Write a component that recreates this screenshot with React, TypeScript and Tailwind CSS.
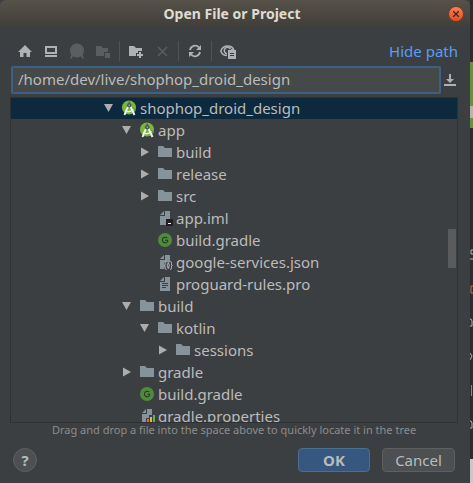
import { useState } from "react";
import type { ReactNode } from "react";

type IconName = "studio" | "folder" | "iml" | "gradle" | "json" | "text" | "properties";
type Arrow = "open" | "closed" | "none";
type Node = { name: string; icon: IconName; arrow: Arrow; indent: string };

const nodes: Node[] = [
  { name: "shophop_droid_design", icon: "studio", arrow: "open", indent: "pl-[89px]" },
  { name: "app", icon: "studio", arrow: "open", indent: "pl-[107px]" },
  { name: "build", icon: "folder", arrow: "closed", indent: "pl-[125px]" },
  { name: "release", icon: "folder", arrow: "closed", indent: "pl-[125px]" },
  { name: "src", icon: "folder", arrow: "closed", indent: "pl-[125px]" },
  { name: "app.iml", icon: "iml", arrow: "none", indent: "pl-[125px]" },
  { name: "build.gradle", icon: "gradle", arrow: "none", indent: "pl-[125px]" },
  { name: "google-services.json", icon: "json", arrow: "none", indent: "pl-[125px]" },
  { name: "proguard-rules.pro", icon: "text", arrow: "none", indent: "pl-[125px]" },
  { name: "build", icon: "folder", arrow: "open", indent: "pl-[107px]" },
  { name: "kotlin", icon: "folder", arrow: "open", indent: "pl-[125px]" },
  { name: "sessions", icon: "folder", arrow: "closed", indent: "pl-[143px]" },
  { name: "gradle", icon: "folder", arrow: "closed", indent: "pl-[107px]" },
  { name: "build.gradle", icon: "gradle", arrow: "none", indent: "pl-[107px]" },
  { name: "gradle.properties", icon: "properties", arrow: "none", indent: "pl-[107px]" },
];

function Svg({ children }: { children: ReactNode }) {
  return (
    <svg width="16" height="16" viewBox="0 0 16 16" className="shrink-0" aria-hidden="true">
      {children}
    </svg>
  );
}

const page = (
  <g fill="#87939a">
    <path d="M8 1h5v14H3V6h5z" />
    <path d="M7 1v4H3z" />
  </g>
);

function FileIcon({ name }: { name: IconName }) {
  switch (name) {
    case "studio":
      return (
        <Svg>
          <circle cx="8" cy="7.500" r="7" fill="#78b83f" />
          <path d="M9 5l6 5-3 4z" fill="#5d9a30" />
          <path d="M7 6.500 3.500 15M9.500 6.500 13.500 15" fill="none" stroke="#f4f4f4" strokeWidth="1.900" />
          <path d="M4 10.500q4 3 8.500-1" fill="none" stroke="#f4f4f4" strokeWidth="1.400" />
          <circle cx="8.200" cy="5.300" r="2.300" fill="#50565a" />
          <circle cx="8.200" cy="5.300" r="0.800" fill="#a8b8a0" />
          <path d="M7.500 1.500h1.400v2H7.500z" fill="#50565a" />
        </Svg>
      );
    case "folder":
      return (
        <Svg>
          <path d="M1 2h5l2 2h7v9H1z" fill="#87939a" />
        </Svg>
      );
    case "iml":
      return (
        <Svg>
          {page}
          <path d="M9 9h7v7H9z" fill="#231f20" />
          <path d="M11 13h3v1h-3z" fill="#fff" />
        </Svg>
      );
    case "gradle":
      return (
        <Svg>
          <circle cx="8" cy="8" r="7" fill="#4f8b3b" />
          <path d="M10.300 6.200A2.800 2.800 0 1 0 10.600 9.500V8.200H8.200" fill="none" stroke="#263a25" strokeWidth="1.100" />
        </Svg>
      );
    case "json":
      return (
        <Svg>
          {page}
          <path d="M7 8h9v8H7z" fill="#3c3f41" opacity=".8" />
          <path
            d="M9.500 7.500q-2 0-1.500 2.200Q8.500 11.500 7 11.500 8.500 11.500 8 13.300 7.500 15.500 9.500 15.500M13 7.500q2 0 1.500 2.200-.5 1.800 1 1.800-1.500 0-1 1.800.5 2.200-1.500 2.200M11.300 8.500q-2 3 0 6 2-3 0-6"
            fill="none"
            stroke="#aab2b6"
          />
        </Svg>
      );
    case "text":
      return (
        <Svg>
          {page}
          <path d="M5 7h6v1H5zM5 9h6v1H5zM5 11h4v1H5z" fill="#3c3f41" />
        </Svg>
      );
    case "properties":
      return (
        <Svg>
          {page}
          <path d="M7 10h3V7h3V6h3v10H7z" fill="#3c3f41" />
          <path d="M8 11h2v5H8z" fill="#f26522" />
          <path d="M11 9h2v7h-2z" fill="#f4af3d" />
          <path d="M14 7h2v9h-2z" fill="#62b543" />
        </Svg>
      );
  }
}

function ArrowIcon({ kind }: { kind: Arrow }) {
  return (
    <Svg>
      {kind === "open" && <path d="M4 4h9l-4.500 8z" fill="#adadad" />}
      {kind === "closed" && <path d="M5 3.500v9L13 8z" fill="#adadad" />}
    </Svg>
  );
}

function Tool({ label, disabled, children }: { label: string; disabled?: boolean; children: ReactNode }) {
  return (
    <button
      type="button"
      aria-label={label}
      disabled={disabled}
      className="flex size-4 items-center justify-center text-[#afb1b3] disabled:text-[#5b5d5e]"
    >
      {children}
    </button>
  );
}

function Divider() {
  return <span className="-mx-[2px] h-5 w-px bg-[#515355]" />;
}

function Toolbar() {
  return (
    <div className="flex h-9 items-center justify-between pt-[10px] pl-[7px]">
      <div className="flex items-center gap-[10px]">
        <Tool label="Home">
          <Svg>
            <path d="M8 2 15 9h-2v5H9.500v-4h-3v4H3V9H1z" fill="currentColor" />
          </Svg>
        </Tool>
        <Tool label="Desktop">
          <Svg>
            <path d="M3 4h10v6H3zM2 13h12" fill="none" stroke="currentColor" strokeWidth="2" strokeLinecap="butt" />
          </Svg>
        </Tool>
        <Tool label="Project" disabled>
          <Svg>
            <path d="M3.500 11 2 15.500M12.500 11l1.500 4.500" stroke="currentColor" strokeWidth="2" />
            <circle cx="8" cy="7.500" r="7" fill="currentColor" />
          </Svg>
        </Tool>
        <Tool label="Module" disabled>
          <Svg>
            <path d="M1 3h5l2 2h5v4H9v4H1zM10 10h5v5h-5z" fill="currentColor" />
          </Svg>
        </Tool>
        <Divider />
        <Tool label="New folder">
          <Svg>
            <path d="M1 3h5l2 2h6v3h-4v2H8v3H1zM11 9h2v2h2v2h-2v2h-2v-2H9v-2h2z" fill="currentColor" />
          </Svg>
        </Tool>
        <Tool label="Delete" disabled>
          <Svg>
            <path d="m4 4 9 9M13 4l-9 9" stroke="currentColor" strokeWidth="1.500" />
          </Svg>
        </Tool>
        <Divider />
        <Tool label="Refresh">
          <Svg>
            <path
              d="M3 7a5.200 5.200 0 0 1 9-2.500M13 9a5.200 5.200 0 0 1-9 2.500"
              fill="none"
              stroke="currentColor"
              strokeWidth="1.800"
            />
            <path d="M14 2v5H9zM2 14V9h5z" fill="currentColor" />
          </Svg>
        </Tool>
        <Divider />
        <Tool label="Show hidden files">
          <Svg>
            <path
              d="M7 12.500C4 12.500 1.500 10.500.8 8 2 5 4.500 3 7.500 3s5.500 1.500 6.500 4"
              fill="none"
              stroke="currentColor"
              strokeWidth="1.500"
            />
            <path d="M10.500 6A3.300 3.300 0 1 0 7 10.800" fill="none" stroke="currentColor" strokeWidth="1.600" />
            <path fillRule="evenodd" d="M8 7h3V6h2v1h3v9H8zM10 10v1h4v-1zM10 12v1h4v-1z" fill="currentColor" />
          </Svg>
        </Tool>
      </div>
      <a href="#path" className="text-[#589df6]">
        Hide path
      </a>
    </div>
  );
}

function Backdrop() {
  return (
    <div className="flex w-[3px] shrink-0 flex-col" aria-hidden="true">
      <div className="h-[62px]" />
      <div className="h-11 bg-[#609635]" />
      <div className="h-3 bg-[#b4b5b3]" />
      <div className="h-[10px] bg-[#609635]" />
      <svg width="3" height="331" viewBox="0 0 3 331" className="flex-1">
        <g fill="none" strokeWidth="1">
          <path d="M3 122H1v4h2M0 131h3" stroke="#a9b7c6" />
          <path d="M3 158H1v7h2" stroke="#cc7832" />
          <path d="M0 191h1l1 2v5H0M0 225l2 3-2 4M0 293h1l1 2v5H0" stroke="#a9b7c6" />
          <path d="M1.500 257v11" stroke="#6897bb" />
        </g>
      </svg>
      <div className="h-6 bg-[#c8c8c8]" />
    </div>
  );
}

export default function App() {
  const [path, setPath] = useState("/home/dev/live/shophop_droid_design");
  const [selected, setSelected] = useState(0);

  return (
    <div className="flex bg-[#2b2d2f] font-['Noto_Sans','Open_Sans',sans-serif] text-[15px] leading-[22px] text-[#bbbbbb]">
      <main className="flex min-w-0 flex-1 flex-col bg-[#3c3f41]">
        <header className="flex h-7 items-center rounded-t-md bg-linear-to-b from-[#565249] to-[#403e39] pr-[6px] pl-4">
          <h1 className="flex-1 text-center text-sm font-bold text-[#dfdbd2]">Open File or Project</h1>
          <button
            type="button"
            aria-label="Close"
            className="flex size-4 items-center justify-center rounded-full border border-[#7f3a22] bg-linear-to-b from-[#f58056] to-[#df4c1c]"
          >
            <svg width="6" height="6" viewBox="0 0 6 6" aria-hidden="true">
              <path d="m0 0 6 6M6 0 0 6" stroke="#4b2418" strokeWidth="1.300" />
            </svg>
          </button>
        </header>

        <div className="flex flex-col pr-3 pl-[10px]">
          <Toolbar />
          <div className="flex items-center gap-px pt-[2px] pb-[3px] pl-px">
            <input
              aria-label="Path"
              value={path}
              onChange={(e) => setPath(e.target.value)}
              className="h-7 min-w-0 flex-1 rounded-xs border-2 border-[#3d6185] bg-[#45494a] px-[5px] pb-[2px] text-[#bbbbbb] outline-none"
            />
            <button type="button" aria-label="Recent paths" className="text-[#afb1b3]">
              <Svg>
                <path d="M7 2h2v5h3l-4 4-4-4h3zM2 12h12v2H2z" fill="currentColor" />
              </Svg>
            </button>
          </div>

          <div className="relative h-[326px] overflow-hidden border border-[#2f3133]">
            <ul role="tree" aria-label="Files" className="-mt-px">
              {nodes.map((node, i) => (
                <li
                  key={i}
                  role="treeitem"
                  aria-selected={selected === i}
                  onClick={() => setSelected(i)}
                  className={`flex h-[22px] items-center ${node.indent} ${selected === i ? "bg-[#0d293e]" : ""}`}
                >
                  <ArrowIcon kind={node.arrow} />
                  <span className="flex items-center gap-[3px] pl-[5px] whitespace-nowrap">
                    <FileIcon name={node.icon} />
                    {node.name}
                  </span>
                </li>
              ))}
            </ul>
            <div className="absolute top-[131px] right-px h-[39px] w-2 bg-[#595b5d]" />
          </div>

          <p className="text-center text-[11px] leading-[14px] text-[#8c8c8c]">
            Drag and drop a file into the space above to quickly locate it in the tree
          </p>
        </div>

        <footer className="flex items-center justify-between pt-[11px] pr-[15px] pb-[11px] pl-[13px]">
          <button
            type="button"
            aria-label="Help"
            className="flex size-6 items-center justify-center rounded-full border border-[#5e6162] bg-[#4c5052] font-bold"
          >
            ?
          </button>
          <div className="flex gap-3">
            <button
              type="button"
              className="flex h-6 w-[72px] items-center justify-center rounded-sm border border-[#4c708c] bg-[#365880] font-bold"
            >
              OK
            </button>
            <button
              type="button"
              className="flex h-6 w-[73px] items-center justify-center rounded-sm border border-[#5e6060] bg-[#4c5052]"
            >
              Cancel
            </button>
          </div>
        </footer>
      </main>
      <Backdrop />
    </div>
  );
}
